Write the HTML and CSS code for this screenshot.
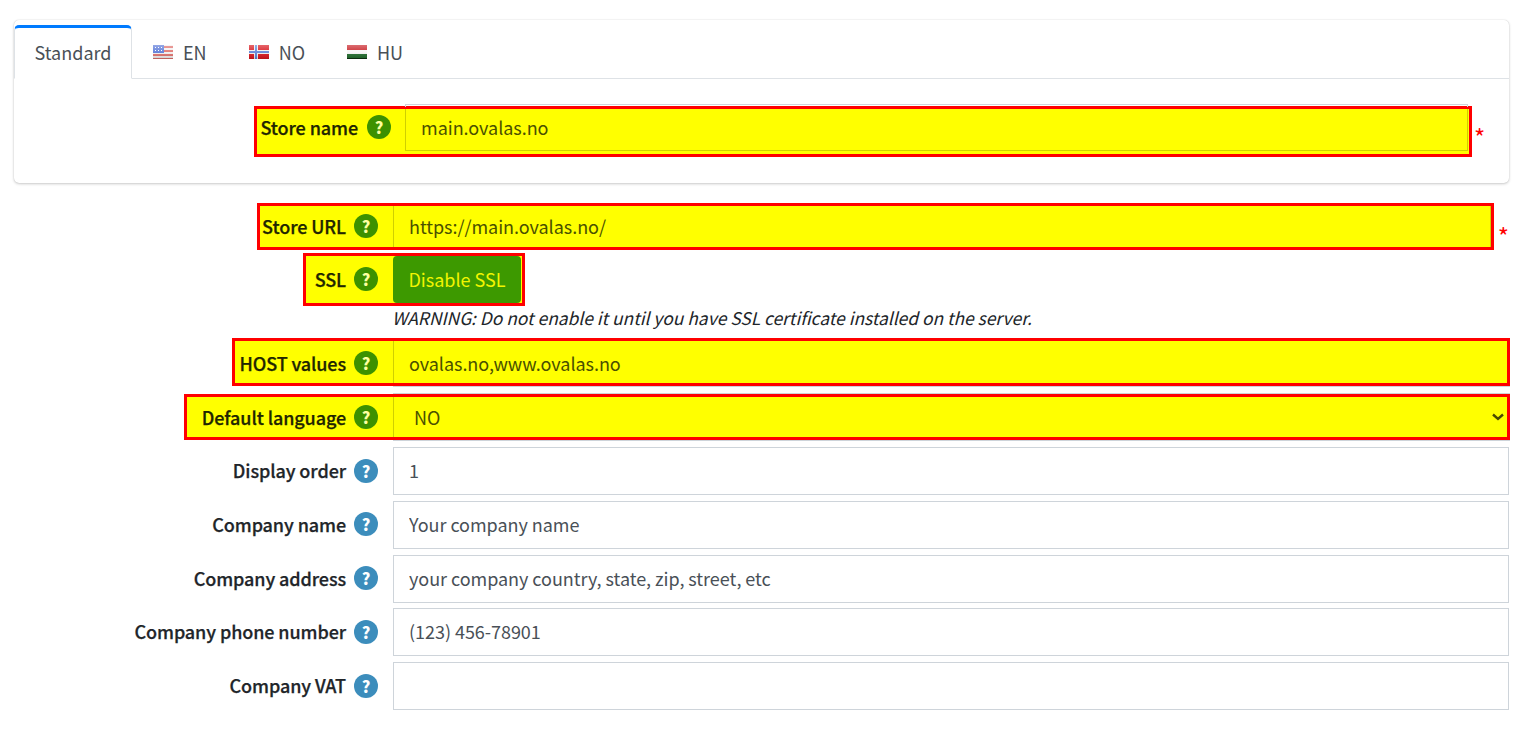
FILE: index.html
```html
<!DOCTYPE html>
<html lang="en">
<head>
<meta charset="utf-8">
<title>Store settings</title>
<link rel="stylesheet" href="styles.css">
</head>
<body>
<svg class="defs" width="0" height="0" aria-hidden="true">
  <defs>
    <linearGradient id="gloss" x1="0" y1="0" x2="0" y2="1">
      <stop offset="0" stop-color="#fff" stop-opacity=".35"/>
      <stop offset=".5" stop-color="#fff" stop-opacity=".1"/>
      <stop offset="1" stop-color="#000" stop-opacity=".15"/>
    </linearGradient>
  </defs>
</svg>

<section class="card">
  <nav class="tabs">
    <a class="tab active">Standard</a>
    <a class="tab">
      <svg class="flag" viewBox="0 0 20 14">
        <rect width="20" height="14" fill="#f4f0f0"/>
        <path d="M0 1h20v2H0zM0 5h20v2H0zM0 9h20v2H0zM0 13h20v1H0z" fill="#e0706c"/>
        <rect width="11" height="8" fill="#5a78d8"/>
        <path d="M2 2h1v1H2zM5 2h1v1H5zM8 2h1v1H8zM2 5h1v1H2zM5 5h1v1H5zM8 5h1v1H8z" fill="#fff"/>
        <rect width="20" height="14" fill="url(#gloss)"/>
      </svg>EN</a>
    <a class="tab">
      <svg class="flag" viewBox="0 0 20 14">
        <rect width="20" height="14" fill="#d8141c"/>
        <path d="M5 0h4v14H5zM0 5h20v4H0z" fill="#f0f0f0"/>
        <path d="M6 0h2v14H6zM0 6h20v2H0z" fill="#5c82d8"/>
        <rect width="20" height="14" fill="url(#gloss)"/>
      </svg>NO</a>
    <a class="tab">
      <svg class="flag" viewBox="0 0 20 14">
        <rect width="20" height="5" fill="#c81e24"/>
        <rect y="5" width="20" height="4" fill="#f6f6f6"/>
        <rect y="9" width="20" height="5" fill="#1f6b2a"/>
        <rect width="20" height="14" fill="url(#gloss)"/>
        <rect y="13" width="20" height="1" fill="#0c2c10"/>
      </svg>HU</a>
  </nav>
  <div class="card-body">
    <div class="row row-name">
      <div class="lab">
        <label class="lab-in hl-left">Store name
          <span class="help green">?</span></label>
      </div>
      <div class="val hl-right">
        <input class="control" value="main.ovalas.no">
      </div>
      <span class="req">*</span>
    </div>
  </div>
</section>

<main class="form">
  <div class="row row-url">
    <div class="lab">
      <label class="lab-in hl-left">Store URL
        <span class="help green">?</span></label>
    </div>
    <div class="val hl-right">
      <input class="control" value="https://main.ovalas.no/">
    </div>
    <span class="req">*</span>
  </div>

  <div class="row row-ssl">
    <div class="lab">
      <label class="lab-in hl-left">SSL
        <span class="help green">?</span></label>
    </div>
    <div class="val hl-right">
      <button class="btn" type="button">Disable SSL</button>
    </div>
  </div>
  <p class="warning">WARNING: Do not enable it until you have SSL certificate installed on the server.</p>

  <div class="row row-host">
    <div class="lab">
      <label class="lab-in hl-left">HOST values
        <span class="help green">?</span></label>
    </div>
    <div class="val hl-right grow">
      <input class="control" value="ovalas.no,www.ovalas.no">
    </div>
  </div>

  <div class="row row-lang">
    <div class="lab">
      <label class="lab-in hl-left">Default language
        <span class="help green">?</span></label>
    </div>
    <div class="val hl-right grow">
      <select class="control select"><option>NO</option></select>
    </div>
  </div>

  <div class="row plain">
    <div class="lab"><label class="lab-in">Display order <span class="help">?</span></label></div>
    <input class="control" value="1">
  </div>
  <div class="row plain">
    <div class="lab"><label class="lab-in">Company name <span class="help">?</span></label></div>
    <input class="control" value="Your company name">
  </div>
  <div class="row plain">
    <div class="lab"><label class="lab-in">Company address <span class="help">?</span></label></div>
    <input class="control" value="your company country, state, zip, street, etc">
  </div>
  <div class="row plain">
    <div class="lab"><label class="lab-in">Company phone number <span class="help">?</span></label></div>
    <input class="control" value="(123) 456-78901">
  </div>
  <div class="row plain">
    <div class="lab"><label class="lab-in">Company VAT <span class="help">?</span></label></div>
    <input class="control" value="">
  </div>
</main>
</body>
</html>
```

FILE: styles.css
```css
* { box-sizing: border-box; }

html, body {
  margin: 0;
  background: #fff;
}

body {
  padding: 20px 25px 0 14px;
  font-family: "Noto Sans CJK SC", "Noto Sans", sans-serif;
  font-size: 18px;
  line-height: 27px;
  color: #212529;
}

.defs { position: absolute; }

/* Card + tabs */
.card {
  height: 163px;
  margin-bottom: 20px;
  background: #fff;
  border-radius: 5px;
  box-shadow: 0 0 1px rgba(0, 0, 0, .2), 0 1px 3px rgba(0, 0, 0, .2);
}

.tabs {
  display: flex;
  height: 59px;
  padding-top: 5px;
  border-bottom: 1px solid #dee2e6;
}

.tab {
  display: flex;
  align-items: center;
  height: 54px;
  padding: 0 21px;
  color: #495057;
}

.tab.active {
  width: 118px;
  justify-content: center;
  padding: 0 0 2px;
  border: 1px solid #dee2e6;
  border-top: 3px solid #007bff;
  border-bottom-color: #fff;
  border-radius: 5px 5px 0 0;
  background: #fff;
}

.flag {
  width: 20px;
  height: 14px;
  margin-right: 10px;
}

.card-body { padding-top: 27px; }

/* Rows */
.row { display: flex; }

.lab {
  display: flex;
  flex: none;
  justify-content: flex-end;
  width: 379px;
}

.lab-in {
  display: flex;
  align-items: center;
  gap: 8px;
  padding-right: 15px;
  padding-bottom: 1px;
  font-weight: 500;
  letter-spacing: -.1px;
  -webkit-text-stroke: .25px currentColor;
  white-space: nowrap;
}

.help {
  display: flex;
  flex: none;
  align-items: center;
  justify-content: center;
  width: 24px;
  height: 24px;
  border-radius: 50%;
  background: #3c8dbc;
  color: #fff;
  font-size: 16px;
  font-weight: 900;
  line-height: 24px;
  -webkit-text-stroke: 0;
}

.help.green {
  background: #3d9100;
  color: #ffffa0;
}

.control {
  display: block;
  width: 100%;
  height: 48px;
  padding: 0 15px 2px;
  border: 1px solid #ced4da;
  border-radius: 0;
  background: #fff;
  color: #495057;
  font: inherit;
  font-weight: 400;
  letter-spacing: -.04px;
  outline: 0;
}

.plain { margin-bottom: 5.75px; }

/* Highlighted rows */
.hl-left {
  border: 3px solid #f00;
  border-right: 0;
  background: #ff0;
  color: #212500;
}

.hl-right {
  border: 3px solid #f00;
  border-left: 0;
  background: #ff0;
}

.val .control {
  height: 100%;
  background-color: #ff0;
  border-color: #cfd000;
  border-width: 0 1px;
  color: #4a5000;
}

.req {
  color: #f00;
  font-size: 24px;
  line-height: 1;
  align-self: center;
}

.row-name .lab { width: 391px; }
.row-name .lab-in { height: 51px; padding-left: 3.5px; padding-right: 14px; padding-bottom: 9px; }
.row-name .help { margin-left: 1px; }
.row-name .val { position: relative; width: 1067px; height: 51px; }
.row-name .val::before {
  content: "";
  position: absolute;
  top: -5px;
  left: 0;
  right: 1px;
  height: 2px;
  border: 1px solid #ced4da;
  border-bottom: 0;
}
.row-name .control {
  width: calc(100% - 1px);
  height: 42px;
  padding-bottom: 5px;
  border-width: 0 1px 1px;
}
.row-name .req { margin: 10px 0 0 2px; }

.row-url { height: 47px; margin-bottom: 3px; }
.row-url .lab-in { padding-left: 2.5px; }
.row-url .val { width: 1103px; }
.row-url .req { margin: 19px 0 0 4px; }

.row-ssl { height: 53px; }
.row-ssl .lab-in { padding-left: 9px; }
.row-ssl .val { padding-right: 1px; }
.row-ssl .btn {
  display: block;
  width: 128px;
  height: 47px;
  padding: 0;
  border: 0;
  border-radius: 4px;
  background: #3d9900;
  color: #f2f500;
  font: inherit;
}

.warning {
  height: 32px;
  margin: 0;
  padding: 0 0 0 378px;
  color: #212529;
  font-style: italic;
  font-size: 17.4px;
  line-height: 23px;
}

.grow { flex: 1; margin-right: -1px; }
.grow .control { border-right-color: #ff0; }

.row-host { height: 48px; margin-bottom: 8px; }
.row-host .lab-in { padding-left: 4px; padding-top: 2px; padding-bottom: 0; }
.row-host .val { box-shadow: 0 1px 0 #ced4da; }
.row-host .control { padding-bottom: 0; padding-top: 1px; }

.row-lang { height: 46px; margin-bottom: 7px; }
.row-lang .lab-in { padding-left: 15px; padding-bottom: 0; }
.row-lang .val { box-shadow: 0 1px 0 #ced4da, 0 -1px 0 #ced4da; }

.val .select {
  padding: 0 15px 0 20px;
  appearance: none;
  background-image: url("data:image/svg+xml,%3Csvg xmlns='http://www.w3.org/2000/svg' width='12' height='8'%3E%3Cpath d='M1 1.5l5 4.5 5-4.5' fill='none' stroke='%234a4a00' stroke-width='2.4'/%3E%3C/svg%3E");
  background-repeat: no-repeat;
  background-position: right 2px center;
}
```
